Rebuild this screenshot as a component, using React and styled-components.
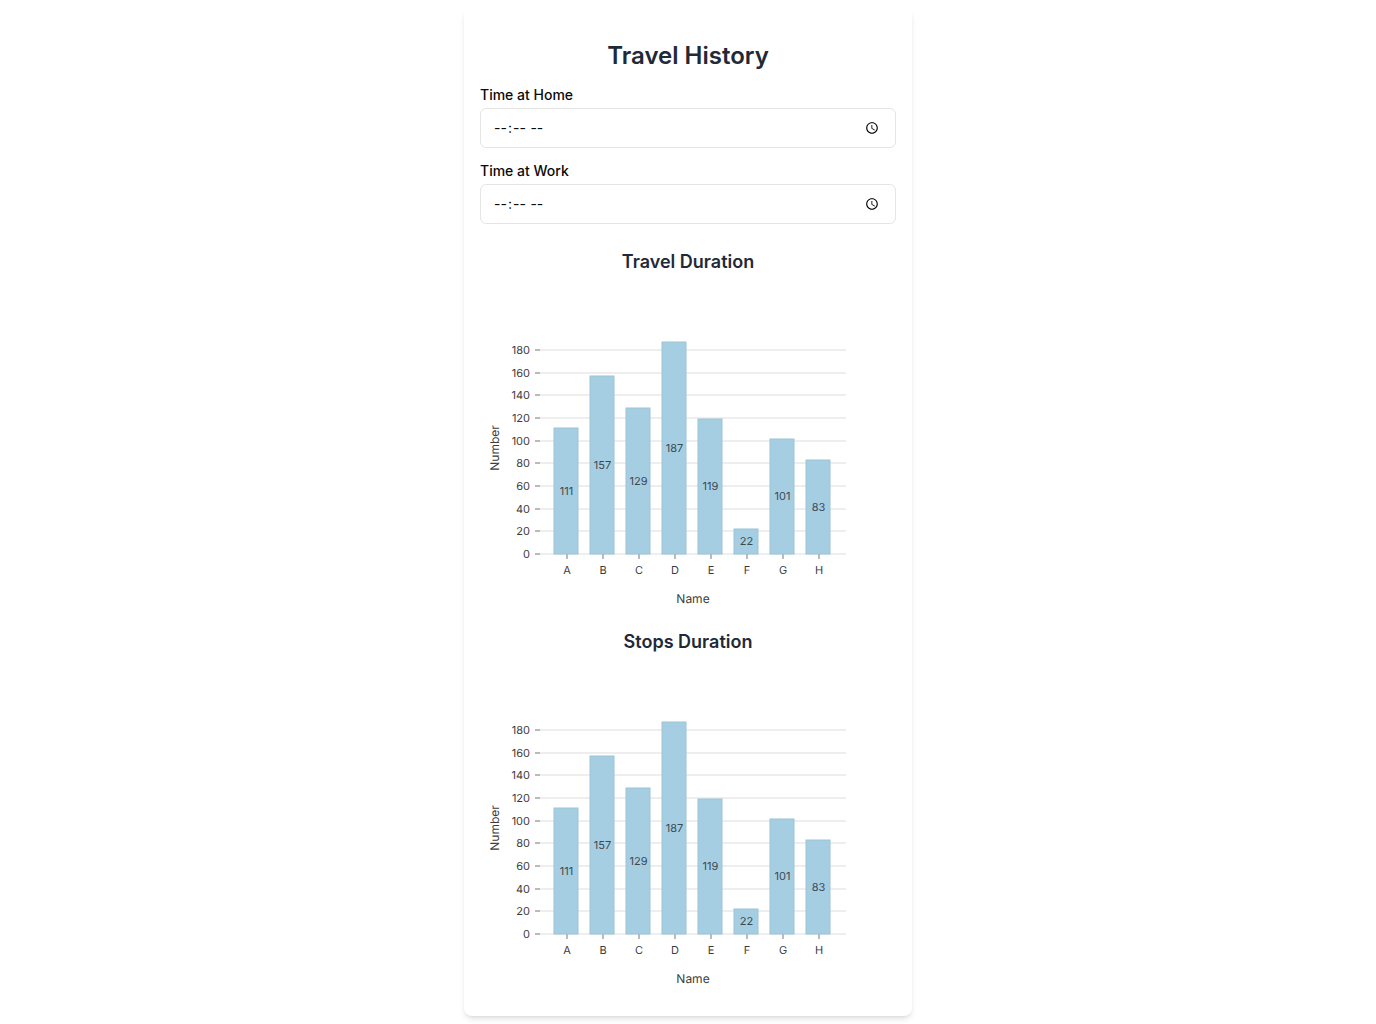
import { useId, useLayoutEffect, useRef, useState } from 'react';
import styled, { createGlobalStyle } from 'styled-components';

const GlobalStyle = createGlobalStyle`
  *, *::before, *::after {
    box-sizing: border-box;
  }
  body {
    margin: 0;
    background: #fff;
    color: #0a0a0a;
    font-family: Inter, "Liberation Sans", sans-serif;
    line-height: 24px;
  }
`;

const Page = styled.div`
  padding: 8px;
`;

const Card = styled.main`
  width: 100%;
  max-width: 448px;
  margin: 0 auto;
  padding: 32px 16px;
  display: flex;
  flex-direction: column;
  gap: 24px;
  background: #fff;
  border-radius: 8px;
  box-shadow: 0 4px 6px -1px rgba(0, 0, 0, 0.1), 0 2px 4px -2px rgba(0, 0, 0, 0.1);
`;

const Stack = styled.div`
  display: flex;
  flex-direction: column;
  gap: 16px;
`;

const Title = styled.h1`
  margin: 0;
  font-size: 24px;
  line-height: 32px;
  font-weight: 600;
  text-align: center;
  color: #1f2937;
`;

const SectionTitle = styled.h2`
  margin: 0;
  font-size: 18px;
  line-height: 28px;
  font-weight: 600;
  text-align: center;
  color: #1f2937;
`;

const Field = styled.div`
  display: flex;
  flex-direction: column;
  gap: 6px;
`;

const Label = styled.label`
  font-size: 14px;
  line-height: 14px;
  font-weight: 500;
`;

const TimeInput = styled.input`
  width: 100%;
  height: 40px;
  padding: 8px 12px;
  border: 1px solid #e5e5e5;
  border-radius: 6px;
  background: #fff;
  color: inherit;
  font-family: inherit;
  font-size: 14px;
  line-height: 20px;
`;

const ChartFrame = styled.div`
  width: 100%;
  aspect-ratio: 4 / 3;
`;

const ChartSvg = styled.svg`
  display: block;
  width: 100%;
  height: 100%;
  overflow: visible;
  font-family: inherit;
  text-rendering: geometricPrecision;
  fill: #3c3c3c;
`;

const GridLine = styled.line`
  stroke: #ddd;
`;

const TickLine = styled.line`
  stroke: #777;
`;

const TickText = styled.text`
  font-size: 11px;
  dominant-baseline: central;
  text-anchor: ${(p) => p.$anchor};
`;

const AxisLegend = styled.text`
  font-size: 12px;
  dominant-baseline: central;
  text-anchor: middle;
`;

const Bar = styled.rect`
  fill: #a6cee3;
  stroke: #9ac4d6;
`;

const BarValue = styled.text`
  font-size: 11px;
  fill: #3b4a52;
  dominant-baseline: central;
  text-anchor: middle;
`;

const DATA = [
  { name: 'A', count: 111 },
  { name: 'B', count: 157 },
  { name: 'C', count: 129 },
  { name: 'D', count: 187 },
  { name: 'E', count: 119 },
  { name: 'F', count: 22 },
  { name: 'G', count: 101 },
  { name: 'H', count: 83 },
];

const MARGIN = { top: 50, right: 50, bottom: 50, left: 60 };
const BAND_PADDING = 0.3;
const BAR_GAP = 1;
const TICK_STEP = 20;

function BarChart({ data, label }) {
  const frame = useRef(null);
  const [size, setSize] = useState(null);

  useLayoutEffect(() => {
    const measure = () =>
      setSize({ width: frame.current.clientWidth, height: frame.current.clientHeight });
    measure();
    const observer = new ResizeObserver(measure);
    observer.observe(frame.current);
    return () => observer.disconnect();
  }, []);

  let plot = null;
  if (size) {
    const width = size.width - MARGIN.left - MARGIN.right;
    const height = size.height - MARGIN.top - MARGIN.bottom;
    const max = Math.max(...data.map((d) => d.count));
    const y = (value) => Math.round(height - (value / max) * height);
    const step = Math.floor(width / (data.length + BAND_PADDING));
    const start = Math.round((width - step * (data.length - BAND_PADDING)) / 2);
    const band = Math.round(step * (1 - BAND_PADDING));
    const barWidth = band - BAR_GAP;
    const ticks = [];
    for (let t = 0; t <= max; t += TICK_STEP) ticks.push(t);

    plot = (
      <g transform={`translate(${MARGIN.left}, ${MARGIN.top})`}>
        {ticks.map((t) => (
          <g key={t} transform={`translate(0, ${y(t)})`}>
            <GridLine x1={0} x2={width} />
            <TickLine x1={-5} x2={0} />
            <TickText x={-10} $anchor="end">{t}</TickText>
          </g>
        ))}
        {data.map((d, i) => (
          <g
            key={d.name}
            transform={`translate(${start + i * step + Math.round(band / 2)}, ${height})`}
          >
            <TickLine y1={0} y2={5} />
            <TickText y={16} $anchor="middle">{d.name}</TickText>
          </g>
        ))}
        <AxisLegend x={width / 2} y={height + 44}>Name</AxisLegend>
        <AxisLegend transform={`translate(-46, ${height / 2}) rotate(-90)`}>Number</AxisLegend>
        {data.map((d, i) => (
          <g key={d.name} transform={`translate(${start + i * step}, ${y(d.count)})`}>
            <Bar width={barWidth} height={height - y(d.count)} />
            <BarValue x={band / 2} y={Math.floor((height - y(d.count)) / 2)}>
              {d.count}
            </BarValue>
          </g>
        ))}
      </g>
    );
  }

  return (
    <ChartFrame ref={frame}>
      <ChartSvg role="img" aria-label={label}>{plot}</ChartSvg>
    </ChartFrame>
  );
}

function TimeField({ label }) {
  const id = useId();
  return (
    <Field>
      <Label htmlFor={id}>{label}</Label>
      <TimeInput id={id} type="time" />
    </Field>
  );
}

function ChartSection({ title }) {
  return (
    <Stack as="section">
      <SectionTitle>{title}</SectionTitle>
      <BarChart data={DATA} label={title} />
    </Stack>
  );
}

export default function App() {
  return (
    <>
      <GlobalStyle />
      <Page>
        <Card>
          <Stack>
            <Title>Travel History</Title>
            <TimeField label="Time at Home" />
            <TimeField label="Time at Work" />
          </Stack>
          <ChartSection title="Travel Duration" />
          <ChartSection title="Stops Duration" />
        </Card>
      </Page>
    </>
  );
}
